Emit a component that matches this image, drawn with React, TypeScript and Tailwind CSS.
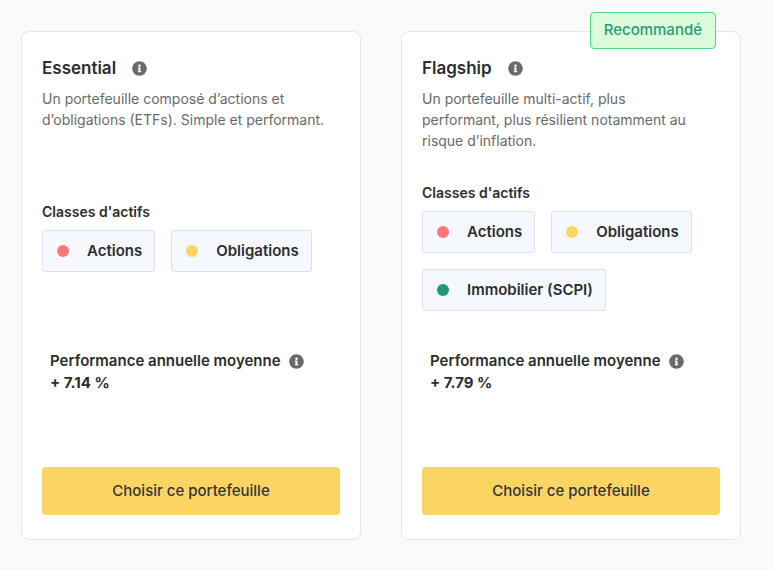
import { FaInfoCircle } from "react-icons/fa";

type Asset = { name: string; dot: string };

type Portfolio = {
  name: string;
  description: string;
  assets: Asset[];
  performance: string;
  recommended?: boolean;
};

const actions: Asset = { name: "Actions", dot: "bg-[#ff7878]" };
const obligations: Asset = { name: "Obligations", dot: "bg-[#fcd462]" };
const immobilier: Asset = { name: "Immobilier (SCPI)", dot: "bg-[#24996e]" };

const portfolios: Portfolio[] = [
  {
    name: "Essential",
    description:
      "Un portefeuille composé d’actions et d’obligations (ETFs). Simple et performant.",
    assets: [actions, obligations],
    performance: "+ 7.14 %",
  },
  {
    name: "Flagship",
    description:
      "Un portefeuille multi-actif, plus performant, plus résilient notamment au risque d’inflation.",
    assets: [actions, obligations, immobilier],
    performance: "+ 7.79 %",
    recommended: true,
  },
];

const InfoButton = ({ label }: { label: string }) => (
  <button type="button" aria-label={label} className="text-[#696969]">
    <FaInfoCircle className="size-[15px]" />
  </button>
);

const PortfolioCard = ({ portfolio }: { portfolio: Portfolio }) => (
  <article className="relative flex flex-col rounded-lg border border-[#e6e6e6] bg-white px-5 py-6">
    {portfolio.recommended && (
      <span className="absolute -top-5 right-6 rounded border border-[#48d98a] bg-[#dbfbdb] px-[13px] pt-1.5 pb-2 text-[15px] leading-[21px] font-medium text-[#2a9d70]">
        Recommandé
      </span>
    )}

    <div className="flex flex-1 flex-col justify-between gap-8">
      <div>
        <div className="flex items-center gap-4">
          <h2 className="text-[17px] leading-6 font-semibold">
            {portfolio.name}
          </h2>
          <InfoButton label={`À propos de ${portfolio.name}`} />
        </div>
        <p className="mt-2 pr-3.5 text-sm leading-[21px] text-[#696969]">
          {portfolio.description}
        </p>
      </div>

      <div className="pb-2">
        <h3 className="text-sm leading-5 font-semibold">Classes d'actifs</h3>
        <ul className="mt-2 flex flex-wrap gap-4">
          {portfolio.assets.map((asset) => (
            <li
              key={asset.name}
              className="flex items-center gap-[18px] rounded-[3px] border border-[#dbe0ea] bg-[#f5f8ff] py-2.5 pr-3 pl-3.5 text-[15px] leading-5 font-semibold"
            >
              <span className={`size-3 rounded-full ${asset.dot}`} />
              {asset.name}
            </li>
          ))}
        </ul>
      </div>

      <div className="px-2">
        <div className="flex items-center gap-2">
          <h3 className="text-[15px] leading-5 font-semibold">
            Performance annuelle moyenne
          </h3>
          <InfoButton label="À propos de la performance" />
        </div>
        <p className="text-[15px] leading-6 font-bold">{portfolio.performance}</p>
      </div>
    </div>

    <button
      type="button"
      className="mt-18 h-12 w-full rounded bg-[#fcd462] text-[15px] font-medium text-[#2f3640]"
    >
      Choisir ce portefeuille
    </button>
  </article>
);

const App = () => {
  return (
    <main className="min-h-screen bg-[#fafafa] pt-[31px] pr-8 pb-[30px] pl-[21px] font-['Inter',sans-serif] text-[#2d2d2d]">
      <div className="grid grid-cols-2 gap-10">
        {portfolios.map((portfolio) => (
          <PortfolioCard key={portfolio.name} portfolio={portfolio} />
        ))}
      </div>
    </main>
  );
};

export default App;
